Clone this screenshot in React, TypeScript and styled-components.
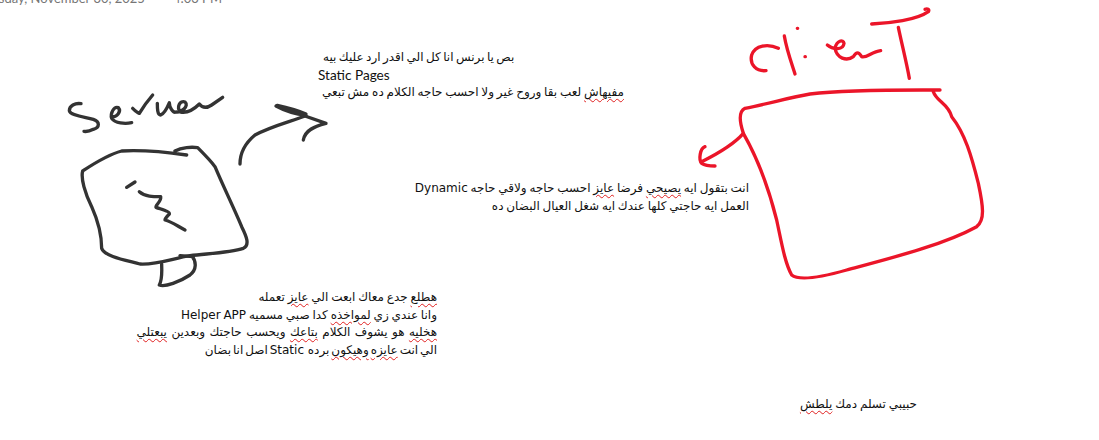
import React from "react";
import styled, { createGlobalStyle } from "styled-components";

const Global = createGlobalStyle`
  html, body { margin: 0; padding: 0; background: #fff; }
`;

const Page = styled.main`
  position: relative;
  width: 1099px;
  height: 440px;
  overflow: hidden;
  background: #fff;
  font-family: "DejaVu Sans", sans-serif;
  color: #111;
`;

const DateBar = styled.header`
  display: flex;
  gap: 28px;
  margin: -9px 0 0 -28px;
  font-family: Lato, sans-serif;
  font-size: 13px;
  line-height: 14px;
  color: #767676;
  white-space: pre;
`;

const Note = styled.section<{ $x: number; $y: number; $w: number; $align: "left" | "right" }>`
  position: absolute;
  left: ${(p) => p.$x}px;
  top: ${(p) => p.$y}px;
  width: ${(p) => p.$w}px;
  display: flex;
  flex-direction: column;
  font-size: 12px;
  line-height: 17.7px;
  text-align: ${(p) => p.$align};
`;

const Line = styled.p<{ $inset?: number; $words?: number }>`
  margin: 0;
  white-space: pre;
  padding: 0 ${(p) => p.$inset ?? 0}px;
  word-spacing: ${(p) => p.$words ?? -1}px;
`;

const LatinLine = styled.p`
  margin: 0;
  white-space: pre;
  font-family: Lato, sans-serif;
  font-size: 13.6px;
`;

const Typo = styled.span`
  text-decoration: underline wavy #e02020 1px;
  text-underline-offset: 2px;
`;

const Sketch = styled.svg<{ $x: number; $y: number; $w: number; $h: number; $ink: string }>`
  position: absolute;
  left: ${(p) => p.$x}px;
  top: ${(p) => p.$y}px;
  width: ${(p) => p.$w}px;
  height: ${(p) => p.$h}px;
  fill: none;
  stroke: ${(p) => p.$ink};
  stroke-width: 10;
  stroke-linecap: round;
  stroke-linejoin: round;
`;

export default function App() {
  return (
    <Page>
      <Global />
      <DateBar>
        <span>Thursday, November 30, 2025</span>
        <span>4:03 PM</span>
      </DateBar>

      <Sketch $x={50} $y={90} $w={290} $h={200} $ink="#333333" viewBox="0 0 870 600">
        <path d="M93 41C75 38 58 48 58 62C60 75 100 80 130 88C150 95 150 112 130 118C118 124 108 125 102 124" />
        <path d="M185 80C200 82 215 65 205 53C192 48 180 70 185 85C195 100 225 102 245 98" />
        <path d="M248 55C255 62 262 68 268 70C280 50 295 30 308 15" />
        <path d="M322 40C322 55 322 75 332 75C345 70 355 45 358 38C358 50 368 70 378 66C395 68 418 48 405 36C390 30 378 52 392 66C415 70 435 55 448 42C458 55 470 55 485 45L518 22" />
        <path d="M410 195C340 185 270 180 215 183C170 195 130 222 98 243C92 265 105 310 125 350C145 395 155 430 155 475C165 500 225 510 270 522C320 525 370 505 420 497C480 490 540 488 580 475C600 465 590 440 575 410C550 350 520 290 495 230C480 210 460 190 443 173C425 170 395 172 375 183" />
        <path d="M230 292L255 276" />
        <path d="M268 305C285 320 310 320 332 320C335 335 315 345 318 352C340 360 360 365 358 372C350 380 345 385 345 390C365 395 385 410 405 420" />
        <path d="M335 522C335 545 338 565 328 585C345 592 390 575 420 555C440 540 440 515 425 497M390 497L430 500" />
        <path d="M570 222C570 190 585 160 615 135C660 110 720 95 765 78" />
        <path d="M678 48C700 60 730 72 768 75M682 46C710 52 745 62 768 72" />
        <path d="M765 78L828 100C795 108 765 120 760 150" />
      </Sketch>

      <Sketch $x={690} $y={0} $w={300} $h={290} $ink="#eb1529" viewBox="0 0 900 870">
        <path d="M265 145C235 130 195 135 185 165C178 195 200 215 228 212" />
        <path d="M283 108C290 150 305 190 315 222" />
        <path d="M322 85L323 85M345 170L346 170" />
        <path d="M412 135C430 150 460 150 462 130C460 118 440 120 435 145C440 175 470 185 490 170C500 155 505 155 515 170C530 175 545 155 572 152" />
        <path d="M545 72C600 70 680 60 715 35C720 28 712 25 705 28" />
        <path d="M625 82C635 130 650 190 658 235" />
        <path d="M750 270C650 270 480 268 360 282C300 292 240 310 165 325C145 335 150 370 160 400C200 470 235 560 260 660C275 730 285 790 305 825C330 845 400 830 470 810C600 775 760 735 860 680C885 660 880 620 865 550C845 470 825 400 785 350C775 310 740 305 730 275" />
        <path d="M160 400C130 435 85 460 35 485M45 440C30 445 25 480 35 490C45 497 60 498 75 498" />
      </Sketch>

      <Note $x={318} $y={49} $w={310} $align="left">
        <Line dir="rtl" $inset={5} $words={-1.4}>بص يا برنس انا كل الي اقدر ارد عليك بيه</Line>
        <LatinLine>Static Pages</LatinLine>
        <Line dir="rtl" $inset={4}><Typo>مفيهاش</Typo> لعب بقا وروح غير ولا احسب حاجه الكلام ده مش تبعي</Line>
      </Note>

      <Note $x={400} $y={180} $w={349} $align="right">
        <Line dir="rtl">انت بتقول ايه <Typo>يصيحي</Typo> فرضا <Typo>عايز</Typo> احسب حاجه ولاقي حاجه Dynamic</Line>
        <Line dir="rtl">العمل ايه حاجتي كلها عندك ايه شغل العيال البضان ده</Line>
      </Note>

      <Note $x={100} $y={289} $w={337} $align="right">
        <Line dir="rtl"><Typo>هطلع</Typo> جدع معاك ابعت الي <Typo>عايز</Typo> تعمله</Line>
        <Line dir="rtl">وانا عندي زي <Typo>لمواخذه</Typo> كدا صبي مسميه Helper APP</Line>
        <Line dir="rtl" $words={0.6}><Typo>هخليه</Typo> هو يشوف الكلام <Typo>بتاعك</Typo> ويحسب حاجتك وبعدين <Typo>يبعتلي</Typo></Line>
        <Line dir="rtl" $words={-1.9}>الي انت <Typo>عايزه</Typo> <Typo>وهيكون</Typo> برده  Static اصل انا بضان</Line>
      </Note>

      <Note $x={780} $y={396} $w={137} $align="right">
        <Line dir="rtl">حبيبي تسلم دمك <Typo>يلطش</Typo></Line>
      </Note>
    </Page>
  );
}
